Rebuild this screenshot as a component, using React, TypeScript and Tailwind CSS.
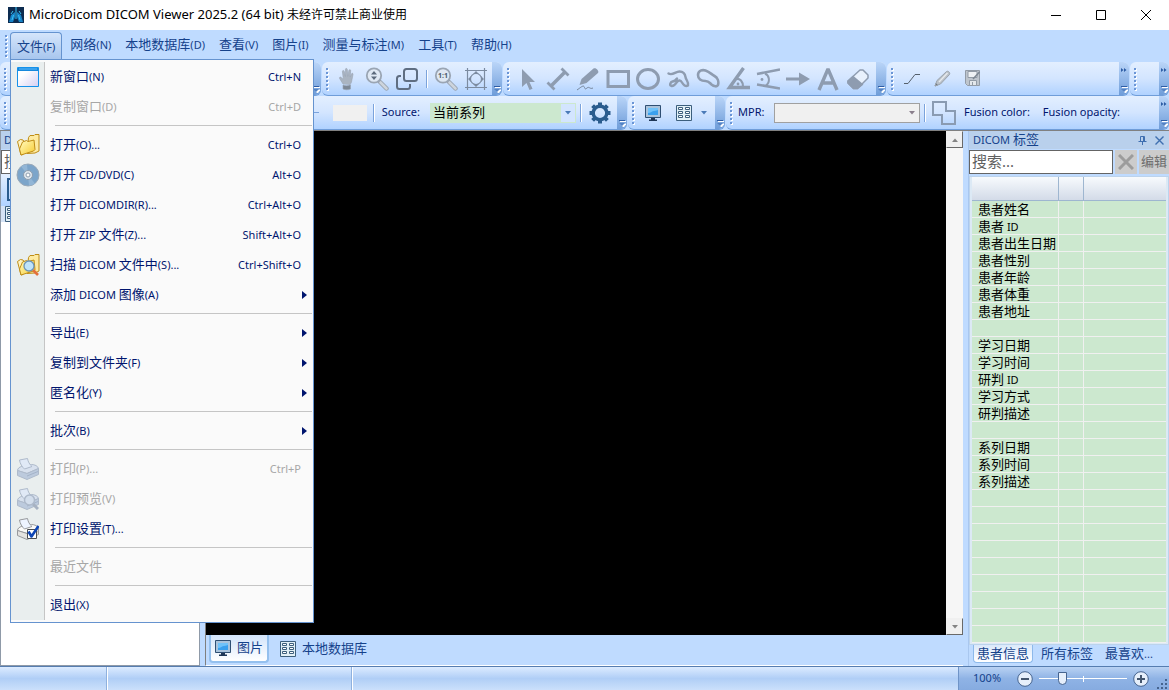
import React, { useState } from 'react';

type IconProps = { className?: string };

/* ---------- Text ---------- */

// Latin runs are set smaller than the Chinese ones
function Mixed({ text }: { text: string }) {
  const parts = text.match(/[\x20-\x7e]+|[^\x20-\x7e]+/g) || [];
  return (
    <span className="block pb-[2px] text-[13px] leading-4 whitespace-pre">
      {parts.map((p, i) => (
        <span key={i} className={/^[\x20-\x7e]/.test(p) ? 'text-[11px]' : 'text-[13px]'}>{p}</span>
      ))}
    </span>
  );
}

/* ---------- Icons ---------- */

const gray = '#8e9cb0';

const HandIcon = () => (
  <svg width="24" height="24" viewBox="0 0 24 24" fill="#aab4c1" stroke="#98a3b1" strokeWidth="0.6">
    <path d="M8 17 4.6 11.5c-.6-1.2.8-1.9 1.6-1l2.2 2L7.4 4.6c-.1-1.3 1.5-1.5 1.8-.3l1.2 5.2V2.4c0-1.3 1.8-1.3 1.9 0l.4 7 1.2-6c.3-1.2 1.9-.9 1.8.3l-.6 6.6 1.3-3.4c.5-1.1 1.9-.6 1.6.6L16.5 15c-.2 1-.9 1.8-1.5 2.4z" />
    <path d="M8 10h7.500l-.5 7H8.500z" stroke="none" />
    <path d="M8 18c2 1 5 1 7.500-.2V22c-2 1-5.500 1-7.500 0z" fill="#7d8896" />
  </svg>
);

const ZoomIcon = ({ children }: { children: React.ReactNode }) => (
  <svg width="24" height="24" viewBox="0 0 24 24" fill="none">
    <path d="m15 15 6.500 6.500" stroke="#98a2af" strokeWidth="4.400" strokeLinecap="round" />
    <path d="m15.500 15.500 6 6" stroke="#cdd4dc" strokeWidth="2.600" strokeLinecap="round" />
    <circle cx="9" cy="8.500" r="7.200" fill="#dfe8f3" stroke="#9aa5b3" strokeWidth="1.800" />
    {children}
  </svg>
);

const CopyIcon = () => (
  <svg width="24" height="24" viewBox="0 0 24 24" fill="none" stroke="#5f6e82" strokeWidth="2">
    <rect x="9" y="2" width="13" height="12" rx="2.500" />
    <path d="M6 9H4.500A2.500 2.500 0 0 0 2 11.500v8A2.500 2.500 0 0 0 4.500 22h8a2.500 2.500 0 0 0 2.500-2.500V17" />
  </svg>
);

const FitIcon = () => (
  <svg width="24" height="24" viewBox="0 0 24 24" fill="none" stroke="#7c8ba0" strokeWidth="1.200">
    <path d="M1 3.500h22M1 20.500h22M3.500 1v22M20.500 1v22" />
    <circle cx="12" cy="12" r="5.500" />
    <path d="m9 7 3-3 3 3zM9 17l3 3 3-3zM7 9l-3 3 3 3zM17 9l3 3-3 3z" fill="#7c8ba0" stroke="none" />
  </svg>
);

const drawIcons: { name: string; art: React.ReactNode }[] = [
  { name: 'Select', art: <path d="M6 2v18l4.500-4 3 7 3-1.300-3-6.700H19z" fill={gray} /> },
  {
    name: 'Length',
    art: (
      <g stroke={gray} fill="none">
        <path d="M5 19 19 5" strokeWidth="3.600" />
        <path d="m1.500 15.500 7 7M15.500 1.500l7 7" strokeWidth="2.800" />
      </g>
    ),
  },
  {
    name: 'Freehand pen',
    art: (
      <g>
        <path d="m3.500 18 2-6L17.500 1.500c2-1.500 6 2 4.500 4.500L10.500 16z" fill={gray} />
        <path d="M1 23c3-2 6-5 7-3.500S8.500 23 11 21s2.500 1.500 6 0" fill="none" stroke="#76859a" />
      </g>
    ),
  },
  { name: 'Rectangle', art: <rect x="2" y="4.500" width="20.500" height="15" fill="none" stroke={gray} strokeWidth="3" /> },
  { name: 'Ellipse', art: <ellipse cx="12" cy="12" rx="10.500" ry="9.500" fill="none" stroke={gray} strokeWidth="3" /> },
  {
    name: 'Curve',
    art: (
      <path
        d="M2.500 6.500c4 2.500 7-2 11-2 3.500 0 5.500 2.500 6 5.500.4 3 3.500 5 2.500 8.500-2.500 1.500-4.500-.5-6-3s-3.500-2.500-5-.5-3 4.500-5.500 4c-2.500-1-1-4 1-4.500 2.500 0 3.500-1.500 4.500-3"
        fill="none" stroke={gray} strokeWidth="2.400" strokeLinecap="round" strokeLinejoin="round"
      />
    ),
  },
  {
    name: 'Closed curve',
    art: (
      <path d="M2 8C2 3.500 6.500 2.500 9.500 3.500c4.500 1.500 6 4 9 5.500 3 1.700 4.500 5.500 3.500 9-.8 2-4 1.700-6.500-.5-2.500-2.300-3-3.500-6-3.500C5 14 2 12 2 8z" fill="none" stroke={gray} strokeWidth="2.600" />
    ),
  },
  {
    name: 'Angle',
    art: (
      <g fill="none" stroke={gray}>
        <path d="M17.500 1 3.500 20.500H24" strokeWidth="3.400" />
        <path d="M10 12c4-.5 7 2 7 8" strokeWidth="2.200" />
        <circle cx="12" cy="17" r="1.400" fill={gray} stroke="none" />
      </g>
    ),
  },
  {
    name: 'Cobb angle',
    art: (
      <g fill="none" stroke={gray}>
        <path d="M24 2.500 1 7M1 17.500l23 4" strokeWidth="2.600" />
        <path d="M9 6.500c4.500 2 5.500 8.500 1 12" strokeWidth="2" />
        <circle cx="6" cy="12.500" r="1.400" fill={gray} stroke="none" />
      </g>
    ),
  },
  { name: 'Arrow', art: <path d="M0 10.500h13V5.500l11 6.500-11 6.500v-5H0z" fill={gray} /> },
  { name: 'Text', art: <path d="M3 23 12 2l9 21M6.500 16h11" fill="none" stroke={gray} strokeWidth="3.400" strokeLinejoin="bevel" /> },
  {
    name: 'Eraser',
    art: (
      <g stroke={gray} strokeWidth="1.500" strokeLinejoin="round">
        <path d="M2 14 14 3h3l5 5v3L11.500 21.500h-4L2 16z" fill="#e8f1fd" />
        <path d="m7 9.500 9.500 8-5 4h-4L2 16v-2z" fill={gray} />
      </g>
    ),
  },
];

const GearIcon = () => (
  <svg width="22" height="22" viewBox="0 0 22 22" fill="none" stroke="#2a5c8e">
    <circle cx="11" cy="11" r="6.800" strokeWidth="3.400" />
    <path d="M11 .5v4M11 17.500v4M.5 11h4M17.500 11h4M3.600 3.600l2.800 2.800M15.600 15.600l2.800 2.800M18.400 3.600l-2.800 2.800M6.400 15.600l-2.800 2.800" strokeWidth="4" />
  </svg>
);

const MonitorIcon = () => (
  <svg width="16" height="16" viewBox="0 0 16 16">
    <path d="M.5.500h15v12H.5z" fill="#a9c3dc" stroke="#2f4f73" />
    <path d="M3 3h10v7H3z" fill="#3aa0ee" />
    <path d="M3 8c3 0 4-2 6-2s3-1 4-1V3H3z" fill="#6fc2fa" />
    <path d="M6 13h4v1.500h2V16H4v-1.500h2z" fill="#1e3656" />
  </svg>
);

const GridIcon = () => (
  <svg width="16" height="16" viewBox="0 0 16 16" fill="#fff" stroke="#3c5f7d">
    <path d="M.5.500h15v15H.5z" fill="#e2f0f6" />
    <path d="M2.500 2.500h4v2h-4zM9.500 2.500h4v2h-4zM2.500 6.500h4v2h-4zM9.500 6.500h4v2h-4zM2.500 10.500h4v2h-4zM9.500 10.500h4v2h-4z" />
  </svg>
);

const FusionIcon = () => (
  <svg width="24" height="24" viewBox="0 0 24 24" fill="none" stroke="#8a9bb2" strokeWidth="2">
    <path d="M1 1h13v9h9v13H10v-9H1z" />
  </svg>
);

const LineIcon = () => (
  <svg width="16" height="12" viewBox="0 0 16 12" fill="none" stroke="#56606c">
    <path d="M0 10.500h4l7-9h5" />
  </svg>
);

const PencilIcon = () => (
  <svg width="17" height="17" viewBox="0 0 17 17" stroke="#9aa2ab">
    <path d="m1 16 2-5.500L12.500 1.500c1.500-1 4 1 3 3L6.500 14z" fill="#b9c0c8" />
    <path d="m5 12 8.500-9" stroke="#e6e9ec" strokeWidth="1.500" />
    <path d="m1 16 1-3 2 2z" fill="#6f7782" />
  </svg>
);

const SaveIcon = () => (
  <svg width="17" height="17" viewBox="0 0 17 17" stroke="#929ba6">
    <path d="M1.500.500h14v15h-12l-2-2z" fill="#bec5cd" />
    <path d="M4 1.500h9v6H4z" fill="#eef1f4" />
    <path d="M5.500 10.500h7v5h-7zM8.500 12v3" fill="#e3e7eb" />
    <path d="m15.500 2-6.500 7" stroke="#7d8792" strokeWidth="1.500" />
  </svg>
);

const WindowIcon = () => (
  <svg width="22" height="20" viewBox="0 0 22 20">
    <defs>
      <linearGradient id="win" x1="0" y1="0" x2="1" y2="1">
        <stop offset="0.300" stopColor="#fff" />
        <stop offset="1" stopColor="#d5cff2" />
      </linearGradient>
    </defs>
    <path d="M.5.500h21v19H.5z" fill="url(#win)" stroke="#1591ea" />
    <path d="M1 1h20v3H1z" fill="#1688dc" />
    <path d="M2 2h18" stroke="#5fbcff" />
  </svg>
);

const FolderArt = () => (
  <g stroke="#bf8d17" strokeLinejoin="round">
    <defs>
      <linearGradient id="folder" x1="0" y1="0" x2="1" y2="1">
        <stop offset="0.200" stopColor="#fff3a6" />
        <stop offset="1" stopColor="#f6c92f" />
      </linearGradient>
    </defs>
    <path d="M12.500 3.500 14 1.500h4l1-1h4V17l-4 2-8 .5z" fill="#fdeaa0" />
    <path d="m1.500 7.500 3-2 2.500.5 2 3L7 20.500l-2 .5z" fill="#fff3c0" />
    <path d="m5 21-1.500-6L6.500 8l4-1.500 1.500 1L18 6l1 9.500-1.500 1.500z" fill="url(#folder)" />
  </g>
);

const FolderIcon = () => (
  <svg width="24" height="22" viewBox="0 0 24 22"><FolderArt /></svg>
);

const ScanIcon = () => (
  <svg width="24" height="22" viewBox="0 0 24 22">
    <FolderArt />
    <path d="m17 16 5 5" stroke="#e2703c" strokeWidth="2.600" />
    <circle cx="13" cy="12" r="5" fill="#bfe4fb" stroke="#6b94b8" strokeWidth="1.300" />
  </svg>
);

const DiscIcon = () => (
  <svg width="24" height="24" viewBox="0 0 24 24">
    <circle cx="12" cy="12" r="11" fill="#7ca5ca" stroke="#9aa9b8" />
    <path d="M12 12 5 3.500A11 11 0 0 1 11 1.500zM12 12l7 8.500a11 11 0 0 1-6 2z" fill="#92b6d6" />
    <circle cx="12" cy="12" r="4.500" fill="#dfe7ee" stroke="#8e9dad" />
    <circle cx="12" cy="12" r="2" fill="#fff" stroke="#8e9dad" />
  </svg>
);

const PrinterIcon = ({ preview, setup }: { preview?: boolean; setup?: boolean }) => {
  const line = setup ? '#97999c' : '#aebacb';
  return (
    <svg width="22" height="22" viewBox="0 0 22 22" stroke={line} strokeLinejoin="round">
      <path d="M.5 12.500c0-2 2-3.500 4-4l10-2c3 0 6.500 1.500 7 4L10 15.500z" fill={setup ? '#fbfaf8' : '#d8e1ee'} />
      <path d="m.5 12.500 9.500 3 11.500-5v6L10 21.500l-9.500-4z" fill={setup ? '#e4e3e0' : '#bccadd'} />
      <path d="m10 18 11-4.500" stroke={setup ? '#b8b8b6' : '#a4b3c8'} fill="none" />
      <path d="m2.500 2 8-1.500c.5 3 2 6 4.500 8L7.500 11C5 9 3 5.500 2.500 2z" fill={setup ? '#eef4ff' : '#e0e9f6'} />
      {preview && (
        <g>
          <path d="m16 16 5 5" stroke="#a7b2c2" strokeWidth="3" />
          <circle cx="12.500" cy="12" r="5" fill="#d3deec" strokeWidth="1.500" />
        </g>
      )}
      {setup && (
        <g>
          <path d="M10.500 11.500h9v9h-9z" fill="#fff" stroke="#4a4d52" />
          <path d="m11.500 13.500 3 5L21.500 8" fill="none" stroke="#0d45b5" strokeWidth="2.600" />
        </g>
      )}
    </svg>
  );
};

const AppIcon = () => (
  <svg width="16" height="16" viewBox="0 0 16 16">
    <path d="M0 0h16v16H0z" fill="#0d2c50" />
    <path d="M7 1v4L3 8l-2 7h4l2-5zM9 1v4l4 3 2 7h-4L9 10z" fill="#1683c8" />
    <path d="M8 0v12M5 4l-2 3M11 4l2 3M5.500 8 4 13M10.500 8l1.500 5" stroke="#3cc3f5" />
  </svg>
);

const Caret = ({ className }: IconProps) => (
  <svg width="6" height="4" viewBox="0 0 6 4" className={className} fill="currentColor"><path d="M0 0h6L3 3.500z" /></svg>
);

/* ---------- Toolbars ---------- */

function Grip() {
  return (
    <div className="mx-1 flex flex-col gap-[2px] shrink-0">
      {[0, 1, 2, 3, 4, 5].map(i => (
        <i key={i} className="size-[2px] bg-[#6a95d6] shadow-[1px_1px_0_#fff]" />
      ))}
    </div>
  );
}

interface ToolbarProps {
  className?: string;
  more?: boolean;
  children?: React.ReactNode;
}

function Toolbar({ className = '', more, children }: ToolbarProps) {
  return (
    <div className={`flex h-[34px] overflow-hidden rounded-md border-b border-[#6f9dd9] bg-linear-to-b from-[#e3efff] via-[#d3e5ff] to-[#b0d2ff] ${className}`}>
      <div className="flex min-w-0 flex-1 items-center">
        <Grip />
        {children}
      </div>
      <button
        aria-label="Toolbar options"
        className="flex w-[10px] shrink-0 flex-col items-center justify-between bg-linear-to-b from-[#bad5f8] to-[#6f9dd9] pt-[6px] pb-[2px] text-[#2e5da5]"
      >
        <svg width="6" height="4" viewBox="0 0 6 4" className={more ? '' : 'invisible'} fill="currentColor">
          <path d="M0 0v4l2.500-2zM3 0v4l2.500-2z" />
        </svg>
        <svg width="7" height="7" viewBox="0 0 7 7">
          <path d="M1 1.500h6M2 4h5L4.500 7z" fill="#fff" stroke="#fff" />
          <path d="M0 .5h6" stroke="#2e5da5" />
          <path d="M0 3h6L3 6z" fill="#5583c4" />
        </svg>
      </button>
    </div>
  );
}

function ToolButton({ label, children }: { label: string; children: React.ReactNode }) {
  return (
    <button aria-label={label} className="flex h-7 w-[30px] shrink-0 items-center justify-center rounded hover:bg-white/50">
      {children}
    </button>
  );
}

const Divider = () => <i className="mx-1 h-[18px] w-px shrink-0 bg-[#7ba3dc] shadow-[1px_0_0_#fff]" />;

/* ---------- File menu ---------- */

interface MenuEntry {
  label: string;
  keys?: string;
  icon?: React.ReactNode;
  disabled?: boolean;
  sub?: boolean;
}

const fileMenu: MenuEntry[][] = [
  [
    { label: '新窗口(N)', keys: 'Ctrl+N', icon: <WindowIcon /> },
    { label: '复制窗口(D)', keys: 'Ctrl+D', disabled: true },
  ],
  [
    { label: '打开(O)...', keys: 'Ctrl+O', icon: <FolderIcon /> },
    { label: '打开 CD/DVD(C)', keys: 'Alt+O', icon: <DiscIcon /> },
    { label: '打开 DICOMDIR(R)...', keys: 'Ctrl+Alt+O' },
    { label: '打开 ZIP 文件(Z)...', keys: 'Shift+Alt+O' },
    { label: '扫描 DICOM 文件中(S)...', keys: 'Ctrl+Shift+O', icon: <ScanIcon /> },
    { label: '添加 DICOM 图像(A)', sub: true },
  ],
  [
    { label: '导出(E)', sub: true },
    { label: '复制到文件夹(F)', sub: true },
    { label: '匿名化(Y)', sub: true },
  ],
  [{ label: '批次(B)', sub: true }],
  [
    { label: '打印(P)...', keys: 'Ctrl+P', disabled: true, icon: <PrinterIcon /> },
    { label: '打印预览(V)', disabled: true, icon: <PrinterIcon preview /> },
    { label: '打印设置(T)...', icon: <PrinterIcon setup /> },
  ],
  [{ label: '最近文件', disabled: true }],
  [{ label: '退出(X)' }],
];

function FileMenu() {
  return (
    <div role="menu" className="absolute -left-px top-full z-20 w-[304px] border border-[#6593cf] bg-[#fafafa] py-[2px]">
      {fileMenu.map((group, g) => (
        <div key={g}>
          {g > 0 && (
            <div className="flex h-2">
              <i className="w-[34px] border-r border-[#c5c5c5] bg-[#e9eeee]" />
              <i className="mt-[3px] mr-px ml-[10px] h-px flex-1 bg-[#c5c5c5]" />
            </div>
          )}
          {group.map(item => (
            <button
              key={item.label}
              role="menuitem"
              disabled={item.disabled}
              className="flex h-[30px] w-full items-center text-left text-[#00156e] enabled:hover:bg-[#ffe9a8] disabled:text-[#a7a7a7]"
            >
              <span className="flex h-full w-[34px] shrink-0 items-center justify-center border-r border-[#c5c5c5] bg-[#e9eeee]">{item.icon}</span>
              <span className="ml-[5px] flex-1"><Mixed text={item.label} /></span>
              {item.keys && <span className="mr-3 text-[11px]">{item.keys}</span>}
              {item.sub && (
                <svg width="5" height="8" viewBox="0 0 5 8" className="mr-[6px]" fill="currentColor"><path d="M0 0v8l5-4z" /></svg>
              )}
            </button>
          ))}
        </div>
      ))}
    </div>
  );
}

const menus = ['网络(N)', '本地数据库(D)', '查看(V)', '图片(I)', '测量与标注(M)', '工具(T)', '帮助(H)'];

function MenuBar() {
  const [open, setOpen] = useState(true);
  return (
    <nav className="flex h-8 items-center pb-[1px] text-[#15428b]">
      <div className="ml-[1px] w-[9px]"><Grip /></div>
      <div className={`relative z-10 mr-px h-[27px] rounded-t-sm border ${open ? 'border-[#6593cf] border-b-0 bg-linear-to-b from-[#d5e5fb] to-[#a8c6ee]' : 'border-transparent'}`}>
        <button onClick={() => setOpen(!open)} className="h-full px-[6px]"><Mixed text="文件(F)" /></button>
        {open && <FileMenu />}
      </div>
      {menus.map(m => (
        <button key={m} className="h-[27px] px-[7px] hover:bg-white/50"><Mixed text={m} /></button>
      ))}
    </nav>
  );
}

/* ---------- Viewer ---------- */

function Viewer() {
  const btn = 'flex size-[17px] items-center justify-center border border-[#f0f0f0] border-r-[#696969] border-b-[#696969] bg-[#f0f0f0] text-[#838383]';
  return (
    <main className="mx-[5px] flex min-w-0 flex-1 flex-col border-l border-b border-l-[#7f7f7f] border-b-white">
      <div className="flex flex-1">
        <div className="flex-1 bg-black" />
        <div className="flex w-[17px] flex-col justify-between bg-[#f6f6f6]">
          <button aria-label="Scroll up" className={btn}><Caret className="rotate-180" /></button>
          <button aria-label="Scroll down" className={btn}><Caret /></button>
        </div>
      </div>
      <div className="flex h-[30px] items-start text-[#15428b]">
        <button className="ml-[3px] flex h-7 items-center gap-[6px] rounded-b border-2 border-t-0 border-[#94c0ee] bg-linear-to-b from-[#d2e4fb] to-white px-1">
          <MonitorIcon /><Mixed text="图片" />
        </button>
        <button className="ml-[11px] flex h-7 items-center gap-[6px]">
          <GridIcon /><Mixed text="本地数据库" />
        </button>
      </div>
    </main>
  );
}

/* ---------- DICOM tags ---------- */

const tags = [
  '患者姓名', '患者 ID', '患者出生日期', '患者性别', '患者年龄', '患者体重', '患者地址', '',
  '学习日期', '学习时间', '研判 ID', '学习方式', '研判描述', '',
  '系列日期', '系列时间', '系列描述', '', '', '', '', '', '', '', '', '',
];

function TagsPanel() {
  const [query, setQuery] = useState('');
  return (
    <aside className="flex w-[201px] shrink-0 flex-col border-l border-[#a9c7ef] text-[#15428b]">
      <div className="flex h-[18px] items-center bg-[#b9d0ec] pr-[5px] pl-1">
        <h2 className="flex-1"><Mixed text="DICOM 标签" /></h2>
        <button aria-label="Pin" className="mr-2">
          <svg width="9" height="9" viewBox="0 0 9 9" fill="none" stroke="#3f6fb0"><path d="M2.500 5.500v-5h4v5M5.500.500v5M.5 5.500h8M4.500 5.500V9" /></svg>
        </button>
        <button aria-label="Close">
          <svg width="9" height="9" viewBox="0 0 9 9" stroke="#3f6fb0" strokeWidth="1.400"><path d="m.5.500 8 8M8.500.500l-8 8" /></svg>
        </button>
      </div>
      <div className="mt-px flex h-[24px] gap-[2px]">
        <input
          aria-label="搜索"
          placeholder="搜索..."
          value={query}
          onChange={e => setQuery(e.target.value)}
          className="min-w-0 flex-1 border border-[#646464] bg-white px-[2px] pb-[2px] text-[15px] text-black placeholder:text-[#5f5f5f]"
        />
        <button aria-label="清除" onClick={() => setQuery('')} className="flex w-[22px] items-center justify-center bg-[#cccccc]">
          <svg width="16" height="16" viewBox="0 0 16 16" stroke="#9c9c9c" strokeWidth="3"><path d="m1 1 14 14M15 1 1 15" /></svg>
        </button>
        <button className="w-[30px] bg-[#cccccc] text-[13px] whitespace-nowrap text-[#6d6d6d]">编辑</button>
      </div>
      <div className="mt-[2px] min-h-0 flex-1 overflow-hidden border border-[#bcd3ec] bg-[#dce9f5] px-[2px]">
        <table className="w-full table-fixed border-collapse bg-[#cce8cf] text-black">
          <thead>
            <tr className="h-[23px] bg-linear-to-b from-[#f7fafd] to-[#d3dbe8]">
              <th className="w-[86px] border-r border-b border-[#9eb6d0]" />
              <th className="w-[25px] border-r border-b border-[#9eb6d0]" />
              <th className="border-b border-[#9eb6d0]" />
            </tr>
          </thead>
          <tbody>
            {tags.map((t, i) => (
              <tr key={i} className="h-[17px] border-b border-[#f0f0f0]">
                <td className="border-r border-[#f0f0f0] py-0 pl-[6px] whitespace-nowrap"><div className="h-4"><Mixed text={t} /></div></td>
                <td className="border-r border-[#f0f0f0]" />
                <td />
              </tr>
            ))}
          </tbody>
        </table>
      </div>
      <div className="flex h-[21px] items-start gap-[8px] pl-1">
        <button className="h-[18px] rounded-b border border-t-0 border-[#8db9ea] bg-linear-to-b from-[#dbe9fb] to-white px-[3px]"><Mixed text="患者信息" /></button>
        <button className="h-[18px]"><Mixed text="所有标签" /></button>
        <button className="ml-1 h-[18px]"><Mixed text="最喜欢..." /></button>
      </div>
    </aside>
  );
}

/* ---------- Status bar ---------- */

function RoundButton({ plus }: { plus?: boolean }) {
  return (
    <button aria-label={plus ? 'Zoom in' : 'Zoom out'}>
      <svg width="16" height="16" viewBox="0 0 16 16">
        <circle cx="8" cy="8" r="7.300" fill="#e6effb" stroke="#46648f" />
        <path d={plus ? 'M4 8h8M8 4v8' : 'M4 8h8'} stroke="#44566e" strokeWidth="2" />
      </svg>
    </button>
  );
}

function StatusBar() {
  const [zoom, setZoom] = useState(24);
  return (
    <footer className="flex h-6 shrink-0 border-t border-[#567db0] bg-linear-to-b from-[#dcebff] via-[#b0cef6] to-[#cbe0fb]">
      <i className="w-[107px] border-r border-[#8fb1de] shadow-[1px_0_0_#fff]" />
      <i className="w-[245px] border-r border-[#8fb1de] shadow-[1px_0_0_#fff]" />
      <div className="ml-auto flex w-[211px] items-center border-l border-[#6f94c8] bg-linear-to-b from-[#b9d2f3] via-[#8fb3e5] to-[#86abe0] pl-[14px]">
        <span className="w-[44px] text-[11px] text-[#15428b]">100%</span>
        <RoundButton />
        <div className="relative mx-[6px] flex flex-1 items-center">
          <input
            type="range"
            aria-label="Zoom"
            value={zoom}
            onChange={e => setZoom(Number(e.target.value))}
            className="h-4 w-full appearance-none bg-transparent [&::-webkit-slider-runnable-track]:h-px [&::-webkit-slider-runnable-track]:bg-white [&::-webkit-slider-thumb]:mt-[-6px] [&::-webkit-slider-thumb]:h-[13px] [&::-webkit-slider-thumb]:w-[9px] [&::-webkit-slider-thumb]:appearance-none [&::-webkit-slider-thumb]:rounded-b-full [&::-webkit-slider-thumb]:border [&::-webkit-slider-thumb]:border-[#46648f] [&::-webkit-slider-thumb]:bg-[#e6effb]"
          />
          <i className="absolute left-1/2 h-[6px] w-px bg-white" />
        </div>
        <RoundButton plus />
        <svg width="11" height="11" viewBox="0 0 11 11" className="mr-px ml-2 self-end" fill="#46648f">
          <path d="M8 0h2v2H8zM4 4h2v2H4zM8 4h2v2H8zM0 8h2v2H0zM4 8h2v2H4zM8 8h2v2H8z" />
        </svg>
      </div>
    </footer>
  );
}

/* ---------- App ---------- */

export default function App() {
  return (
    <div className="flex h-screen flex-col overflow-hidden bg-[#bfdbff] font-['Noto_Sans','Noto_Sans_CJK_SC',sans-serif]">
      <header className="flex h-[30px] shrink-0 items-center bg-white pl-2">
        <AppIcon />
        <h1 className="ml-[5px] flex-1 text-[12px] whitespace-pre text-black">
          <span className="text-[13px]">MicroDicom DICOM Viewer 2025.2 (64 bit) </span>未经许可禁止商业使用
        </h1>
        <button aria-label="Minimize" className="flex w-[45px] justify-center">
          <svg width="10" height="10" viewBox="0 0 10 10" stroke="#000"><path d="M0 5.500h10" /></svg>
        </button>
        <button aria-label="Maximize" className="flex w-[45px] justify-center">
          <svg width="10" height="10" viewBox="0 0 10 10" fill="none" stroke="#000"><path d="M.5.500h9v9h-9z" /></svg>
        </button>
        <button aria-label="Close" className="flex w-[46px] justify-center">
          <svg width="10" height="10" viewBox="0 0 10 10" stroke="#000"><path d="m0 0 10 10M10 0 0 10" /></svg>
        </button>
      </header>

      <MenuBar />

      <div className="flex shrink-0 gap-px">
        <Toolbar className="w-[321px]" />
        <Toolbar className="w-[180px]">
          <ToolButton label="Pan"><HandIcon /></ToolButton>
          <ToolButton label="Zoom">
            <ZoomIcon><path d="m6 7.500 3-3.500 3 3.500zM6 9.500h6L9 13z" fill="#5c6a7c" /></ZoomIcon>
          </ToolButton>
          <ToolButton label="Clone"><CopyIcon /></ToolButton>
          <Divider />
          <ToolButton label="Actual size">
            <ZoomIcon>
              <text x="9" y="11" textAnchor="middle" fontSize="7" fontWeight="bold" fill="#4d5a6b">1:1</text>
            </ZoomIcon>
          </ToolButton>
          <ToolButton label="Fit"><FitIcon /></ToolButton>
        </Toolbar>
        <Toolbar className="w-[383px]">
          {drawIcons.map(d => (
            <ToolButton key={d.name} label={d.name}>
              <svg width="24" height="24" viewBox="0 0 24 24">{d.art}</svg>
            </ToolButton>
          ))}
        </Toolbar>
        <Toolbar className="flex-1" more>
          <ToolButton label="Line"><LineIcon /></ToolButton>
          <ToolButton label="Edit"><PencilIcon /></ToolButton>
          <ToolButton label="Save"><SaveIcon /></ToolButton>
        </Toolbar>
        <Toolbar className="w-[39px]" more />
      </div>

      <div className="flex shrink-0 gap-px text-[11px] text-[#00156e]">
        <Toolbar className="w-[627px]">
          <div className="ml-auto flex items-center">
            <i className="mr-[14px] h-px w-8 bg-[#7ba3dc]" />
            <i className="mr-[2px] h-4 w-[34px] bg-[#f0f0f0]" />
            <Divider />
            <label htmlFor="source" className="ml-1">Source:</label>
            <div className="ml-[10px] flex h-5 w-[146px] items-center border border-[#cce8cf] bg-[#cce8cf]">
              <select id="source" className="min-w-0 flex-1 appearance-none pl-[2px] text-[13px] text-black">
                <option>当前系列</option>
              </select>
              <span className="flex h-full w-[14px] items-center justify-center bg-[#d3e5ff] text-[#4a7ab8]"><Caret /></span>
            </div>
            <Divider />
            <ToolButton label="Settings"><GearIcon /></ToolButton>
            <i className="w-[2px]" />
          </div>
        </Toolbar>
        <Toolbar className="w-[97px]">
          <ToolButton label="Display"><MonitorIcon /></ToolButton>
          <button aria-label="Layout" className="flex flex-1 items-center justify-center gap-[9px] text-[#4a7ab8]">
            <GridIcon /><Caret />
          </button>
        </Toolbar>
        <Toolbar className="flex-1" more>
          <label htmlFor="mpr" className="ml-[2px] w-9">MPR:</label>
          <div className="flex h-5 w-[146px] items-center border border-[#a0a0a0] bg-[#f0f0f0] text-[#8a7f8c]">
            <select id="mpr" disabled className="min-w-0 flex-1 appearance-none" />
            <Caret className="mr-1" />
          </div>
          <Divider />
          <ToolButton label="Fusion"><FusionIcon /></ToolButton>
          <span className="ml-[5px]">Fusion color:</span>
          <span className="ml-[13px]">Fusion opacity:</span>
        </Toolbar>
      </div>

      <div className="flex min-h-0 flex-1 border-t border-[#808080]">
        <aside className="flex w-[200px] shrink-0 flex-col border-r border-b border-l border-[#8f9aa8] text-[#15428b]">
          <div className="h-[18px] bg-[#b9d0ec] pl-[3px]"><Mixed text="DICOM" /></div>
          <input aria-label="搜索" placeholder="搜索..." className="mt-px h-[24px] border border-[#646464] bg-white px-[2px] pb-[2px] text-[15px] placeholder:text-[#5f5f5f]" />
          <div className="h-[32px] bg-linear-to-b from-[#e3efff] to-[#b0d2ff] py-1 pl-[6px]">
            <i className="block h-[23px] w-5 border-2 border-[#2a5c8e]" />
          </div>
          <div className="flex h-4 bg-[#d5e3f5] pl-1"><GridIcon /></div>
          <div className="flex-1 bg-white" />
        </aside>
        <Viewer />
        <TagsPanel />
      </div>

      <StatusBar />
    </div>
  );
}
